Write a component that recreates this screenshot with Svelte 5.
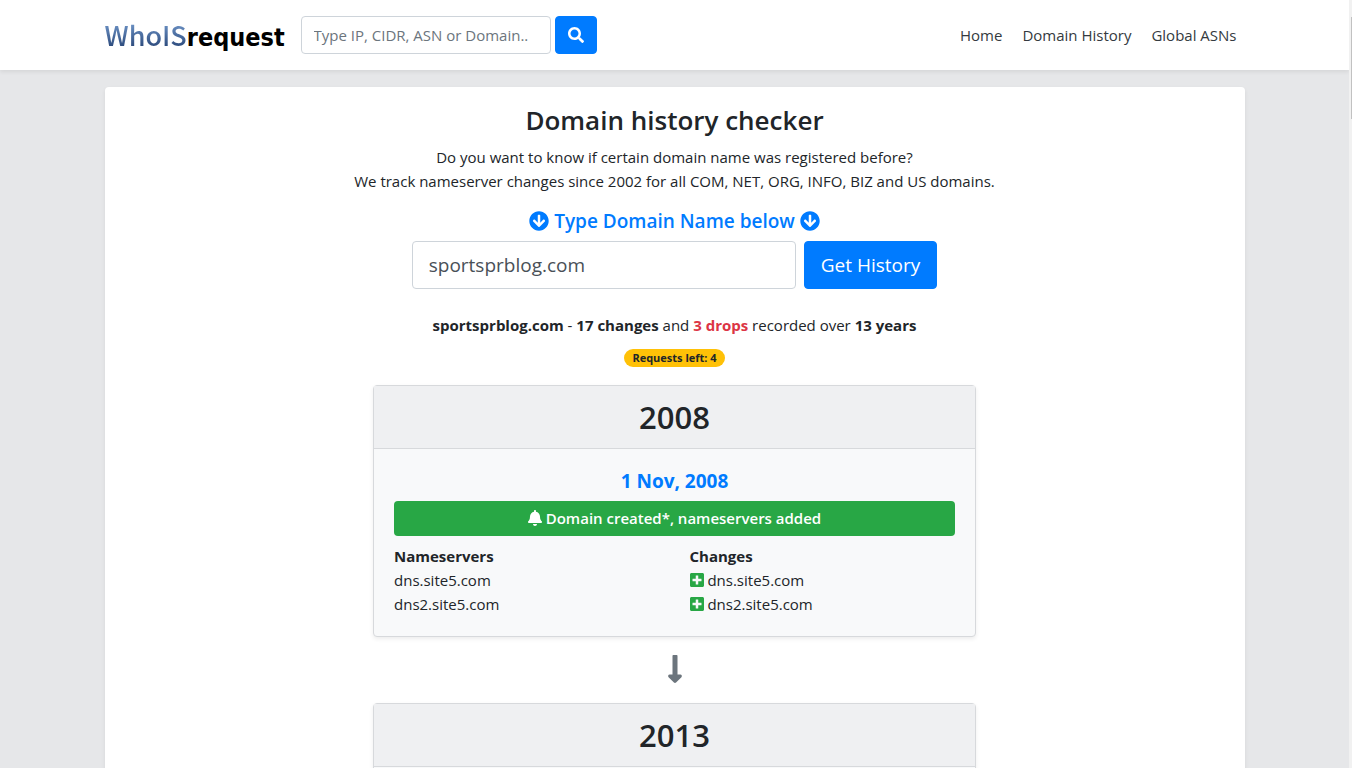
<script>
  let search = ""
  let domain = "sportsprblog.com"

  const links = ["Home", "Domain History", "Global ASNs"]

  const history = [
    {
      year: 2008,
      date: "1 Nov, 2008",
      event: "Domain created*, nameservers added",
      nameservers: ["dns.site5.com", "dns2.site5.com"],
      added: ["dns.site5.com", "dns2.site5.com"]
    },
    { year: 2013 }
  ]

  const icons = {
    search: ["0 0 512 512", "M505 442.7L405.3 343c-4.5-4.5-10.6-7-17-7H372c27.6-35.3 44-79.7 44-128C416 93.1 322.9 0 208 0S0 93.1 0 208s93.1 208 208 208c48.3 0 92.7-16.4 128-44v16.3c0 6.4 2.5 12.5 7 17l99.7 99.7c9.4 9.4 24.6 9.4 33.9 0l28.3-28.3c9.4-9.4 9.4-24.6.1-34zM208 336c-70.7 0-128-57.2-128-128 0-70.7 57.2-128 128-128 70.7 0 128 57.2 128 128 0 70.7-57.2 128-128 128z"],
    circle: ["0 0 512 512", "M504 256c0 137-111 248-248 248S8 393 8 256 119 8 256 8s248 111 248 248zm-143.6-28.9L288 302.6V120c0-13.3-10.7-24-24-24h-16c-13.3 0-24 10.7-24 24v182.6l-72.4-75.5c-9.3-9.7-24.8-9.9-34.3-.4l-10.9 11c-9.4 9.4-9.4 24.6 0 33.9L239 404.3c9.4 9.4 24.6 9.4 33.9 0l132.7-132.7c9.4-9.4 9.4-24.6 0-33.9l-10.9-11c-9.5-9.5-25-9.3-34.3.4z"],
    bell: ["0 0 448 512", "M224 512c35.32 0 63.97-28.65 63.97-64H160.03c0 35.35 28.65 64 63.97 64zm215.39-149.71c-19.32-20.76-55.47-51.99-55.47-154.29 0-77.7-54.48-139.9-127.94-155.16V32c0-17.67-14.32-32-31.98-32s-31.98 14.33-31.98 32v20.84C118.56 68.1 64.08 130.3 64.08 208c0 102.3-36.15 133.53-55.47 154.29-6 6.45-8.66 14.16-8.61 21.71.11 16.4 12.98 32 32.1 32h383.8c19.12 0 32-15.6 32.1-32 .05-7.55-2.61-15.27-8.61-21.71z"],
    plus: ["0 0 448 512", "M400 32H48C21.5 32 0 53.5 0 80v352c0 26.5 21.5 48 48 48h352c26.5 0 48-21.5 48-48V80c0-26.5-21.5-48-48-48zm-32 252c0 6.6-5.4 12-12 12h-92v92c0 6.6-5.4 12-12 12h-56c-6.6 0-12-5.4-12-12v-92H92c-6.6 0-12-5.4-12-12v-56c0-6.6 5.4-12 12-12h92v-92c0-6.6 5.4-12 12-12h56c6.6 0 12 5.4 12 12v92h92c6.6 0 12 5.4 12 12v56z"],
    down: ["0 0 256 512", "M168 345.941V44c0-6.627-5.373-12-12-12h-56c-6.627 0-12 5.373-12 12v301.941H41.941c-21.382 0-32.09 25.851-16.971 40.971l86.059 86.059c9.373 9.373 24.569 9.373 33.941 0l86.059-86.059c15.119-15.119 4.411-40.971-16.971-40.971H168z"]
  }
</script>

{#snippet icon(name)}
  <svg class="icon {name}" viewBox={icons[name][0]} aria-hidden="true"><path d={icons[name][1]} /></svg>
{/snippet}

<div class="page">
  <header>
    <div class="container bar">
      <a class="logo" href="/"><span class="who">WhoIS</span><span class="request">request</span></a>
      <form class="search-form" on:submit|preventDefault>
        <input type="text" aria-label="Search" placeholder="Type IP, CIDR, ASN or Domain.." bind:value={search}>
        <button type="submit" aria-label="Search">{@render icon("search")}</button>
      </form>
      <nav>
        {#each links as link}
          <a href="/">{link}</a>
        {/each}
      </nav>
    </div>
  </header>

  <main class="container">
    <h1>Domain history checker</h1>
    <p>Do you want to know if certain domain name was registered before?<br>We track nameserver changes since 2002 for all COM, NET, ORG, INFO, BIZ and US domains.</p>

    <form class="domain-form" on:submit|preventDefault>
      <label for="domain">{@render icon("circle")} Type Domain Name below {@render icon("circle")}</label>
      <div class="fields">
        <input type="text" id="domain" bind:value={domain}>
        <button type="submit">Get History</button>
      </div>
    </form>

    <p class="summary"><b>sportsprblog.com</b> - <b>17 changes</b> and <b class="drops">3 drops</b> recorded over <b>13 years</b></p>
    <span class="badge">Requests left: 4</span>

    {#each history as item, i}
      {#if i > 0}
        <div class="next">{@render icon("down")}</div>
      {/if}
      <section class="year">
        <h2>{item.year}</h2>
        <div class="body">
          {#if item.date}
            <h3>{item.date}</h3>
            <div class="event">{@render icon("bell")} {item.event}</div>
            <div class="columns">
              <div>
                <b>Nameservers</b>
                <ul>
                  {#each item.nameservers as ns}
                    <li>{ns}</li>
                  {/each}
                </ul>
              </div>
              <div>
                <b>Changes</b>
                <ul>
                  {#each item.added as ns}
                    <li>{@render icon("plus")} {ns}</li>
                  {/each}
                </ul>
              </div>
            </div>
          {/if}
        </div>
      </section>
    {/each}
  </main>
</div>
<div class="scrollbar"><div class="thumb"></div></div>

<style>
  :global(body) {
    background: #e6e7e9;
    overflow: hidden;
  }

  .page {
    height: 100vh;
    overflow: hidden;
    margin-right: 3px;
    font-family: "Segoe UI", "Open Sans", "Noto Sans", sans-serif;
    font-size: 15px;
    line-height: 24px;
    color: #212529;
  }

  .container {
    box-sizing: border-box;
    max-width: 1140px;
    margin: 0 auto;
  }

  header {
    position: relative;
    background: white;
    box-shadow: 0 2px 4px rgba(0, 0, 0, .075);
  }

  .bar {
    display: flex;
    align-items: center;
    height: 70px;
  }

  .logo {
    display: flex;
    align-items: baseline;
    width: 180px;
    margin-right: 16px;
    text-decoration: none;
    white-space: nowrap;
  }

  .who {
    font-family: "Noto Sans CJK SC", sans-serif;
    font-size: 27px;
    line-height: 40px;
    font-weight: 500;
    color: transparent;
    background: linear-gradient(#6d93c6 20%, #2c4a7c 80%);
    background-clip: text;
  }

  .request {
    font-family: "DejaVu Sans Condensed", "DejaVu Sans", sans-serif;
    font-size: 25px;
    font-weight: bold;
    color: black;
  }

  form,
  p,
  h1,
  h2,
  h3 {
    margin: 0;
  }

  input,
  button {
    box-sizing: border-box;
    border: 1px solid #ced4da;
    border-radius: 4px;
    font-family: inherit;
    font-size: 15px;
    color: #495057;
  }

  input::placeholder {
    color: #6c757d;
  }

  button {
    border-color: #007bff;
    background: #007bff;
    color: white;
    cursor: pointer;
  }

  .search-form {
    display: flex;
    gap: 4px;
  }

  .search-form input {
    width: 250px;
    height: 38px;
    padding: 6px 12px;
  }

  .search-form button {
    width: 42px;
    height: 38px;
    padding: 0;
  }

  nav {
    display: flex;
    gap: 4px;
    margin-left: auto;
  }

  nav a {
    padding: 8px;
    color: #343a40;
    text-decoration: none;
  }

  .icon {
    width: 16px;
    height: 16px;
    fill: currentColor;
    vertical-align: -2px;
  }

  main.container {
    margin-top: 17px;
    padding: 16px 20px;
    border-radius: 4px;
    background: white;
    box-shadow: 0 2px 4px rgba(0, 0, 0, .075);
    text-align: center;
  }

  h1 {
    margin-bottom: 8px;
    font-size: 26px;
    line-height: 34px;
    font-weight: 600;
  }

  .domain-form {
    margin-top: 16px;
  }

  label {
    display: block;
    margin-bottom: 8px;
    font-size: 19px;
    font-weight: 600;
    color: #007bff;
  }

  .circle {
    width: 20px;
    height: 20px;
    vertical-align: -3px;
  }

  .fields {
    display: flex;
    justify-content: center;
    gap: 8px;
  }

  .fields input {
    width: 384px;
    height: 48px;
    padding: 8px 16px;
    font-size: 19px;
  }

  .fields button {
    height: 48px;
    padding: 8px 16px;
    font-size: 19px;
  }

  .summary {
    margin-top: 24px;
  }

  .drops {
    color: #dc3545;
  }

  .badge {
    display: block;
    width: fit-content;
    margin: 12px auto 18px;
    padding: 0 8px;
    border-radius: 10px;
    background: #ffc107;
    font-size: 11px;
    line-height: 18px;
    font-weight: bold;
  }

  .year {
    box-sizing: border-box;
    max-width: 603px;
    margin: 0 auto;
    border: 1px solid #d7d9dc;
    border-radius: 4px;
    background: #f8f9fa;
    box-shadow: 0 2px 4px rgba(0, 0, 0, .075);
  }

  h2 {
    padding: 12px 20px;
    border-bottom: 1px solid #d7d9dc;
    background: #eff0f2;
    font-size: 31px;
    line-height: 38px;
    font-weight: 600;
  }

  .body {
    padding: 20px;
  }

  h3 {
    margin-bottom: 8px;
    font-size: 19px;
    line-height: 24px;
    font-weight: bold;
    color: #007bff;
  }

  .event {
    border-radius: 4px;
    background: #28a745;
    font-weight: 600;
    line-height: 35px;
    color: white;
  }

  .columns {
    display: grid;
    grid-template-columns: 1fr 1fr;
    gap: 30px;
    margin-top: 8px;
    text-align: left;
  }

  ul {
    margin: 0;
    padding: 0;
    list-style: none;
  }

  .plus {
    width: 14px;
    color: #28a745;
  }

  .bell {
    width: 14px;
  }

  .next {
    display: flex;
    justify-content: center;
    padding: 16px 0 18px;
    color: #6c757d;
  }

  .down {
    width: 16px;
    height: 32px;
  }

  .scrollbar {
    position: fixed;
    top: 0;
    right: 0;
    bottom: 0;
    width: 3px;
    background: #f1f1f1;
  }

  .thumb {
    height: 102px;
    margin: 17px 0 0 2px;
    background: #c1c1c1;
  }
</style>
